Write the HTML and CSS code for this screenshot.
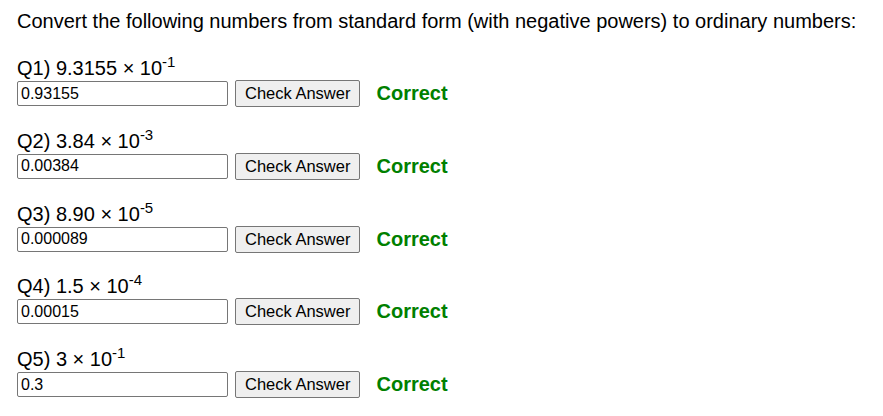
FILE: index.html
```html
<!DOCTYPE html>
<html>
<head>
<meta charset="utf-8">
<link rel="stylesheet" href="styles.css">
</head>
<body>
<div class="page">
  <p class="intro">Convert the following numbers from standard form (with negative powers) to ordinary numbers:</p>
  <div class="question">
    <div class="label">Q1) 9.3155 × 10<sup>-1</sup></div>
    <div class="row"><input class="answer" type="text" value="0.93155"><button class="check">Check Answer</button><span class="result">Correct</span></div>
  </div>
  <div class="question">
    <div class="label">Q2) 3.84 × 10<sup>-3</sup></div>
    <div class="row"><input class="answer" type="text" value="0.00384"><button class="check">Check Answer</button><span class="result">Correct</span></div>
  </div>
  <div class="question">
    <div class="label">Q3) 8.90 × 10<sup>-5</sup></div>
    <div class="row"><input class="answer" type="text" value="0.000089"><button class="check">Check Answer</button><span class="result">Correct</span></div>
  </div>
  <div class="question">
    <div class="label">Q4) 1.5 × 10<sup>-4</sup></div>
    <div class="row"><input class="answer" type="text" value="0.00015"><button class="check">Check Answer</button><span class="result">Correct</span></div>
  </div>
  <div class="question">
    <div class="label">Q5) 3 × 10<sup>-1</sup></div>
    <div class="row"><input class="answer" type="text" value="0.3"><button class="check">Check Answer</button><span class="result">Correct</span></div>
  </div>
</div>
</body>
</html>
```

FILE: styles.css
```css
html, body {
  margin: 0;
  padding: 0;
  background: #ffffff;
}

.page {
  padding: 10px 17px;
  font-family: "Liberation Sans", Arial, sans-serif;
  color: #000;
}

.intro {
  margin: 0 0 24px 0;
  font-size: 20px;
  line-height: 23px;
}

.question {
  margin-bottom: 22.75px;
}

.label {
  font-size: 20px;
  line-height: 23px;
}

.label sup {
  font-size: 15px;
  line-height: 0;
  vertical-align: 8px;
}

.row {
  display: flex;
  align-items: center;
  height: 27px;
}

.answer {
  box-sizing: border-box;
  width: 211px;
  height: 25px;
  margin: 0;
  padding: 1px 3px;
  border: 1px solid #767676;
  border-radius: 2px;
  font-family: "Liberation Sans", Arial, sans-serif;
  font-size: 16px;
  color: #000;
}

.check {
  box-sizing: border-box;
  height: 27px;
  margin: 0 0 0 7px;
  padding: 0 9px;
  border: 1px solid #767676;
  border-radius: 2px;
  background: #efefef;
  font-family: "Liberation Sans", Arial, sans-serif;
  font-size: 16.5px;
  color: #000;
}

.result {
  margin-left: 16px;
  font-size: 20px;
  font-weight: bold;
  color: #008000;
}
```
